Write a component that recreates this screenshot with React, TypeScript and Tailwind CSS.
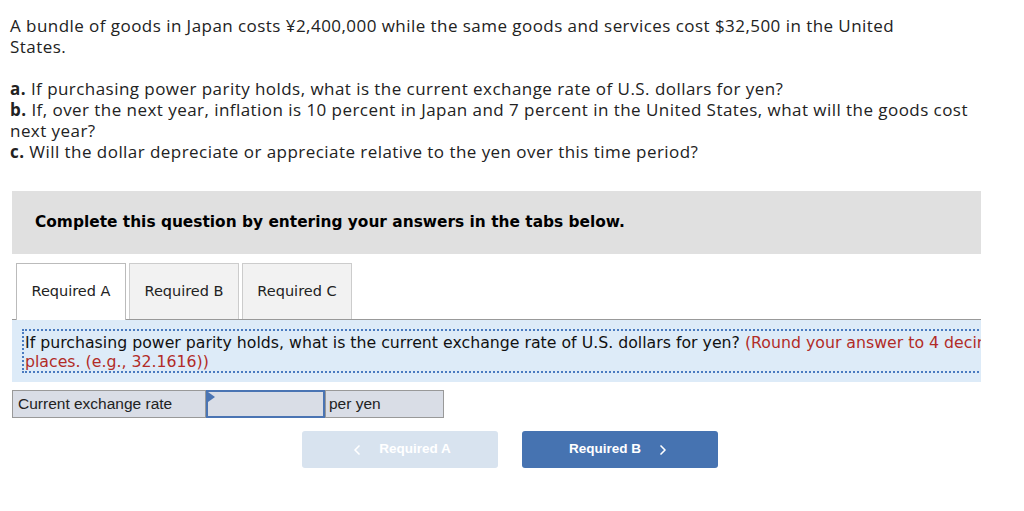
import { ChevronLeft, ChevronRight } from "lucide-react";

const tabs = ["Required A", "Required B", "Required C"];

export default function App() {
  return (
    <div className="h-[511px] w-[1024px] overflow-hidden bg-white">
      <div className="whitespace-nowrap pl-[10px] pt-[15px] font-['Open_Sans',sans-serif] text-[17px] leading-[21px] tracking-[0.45px] text-[#222]">
        <p>
          A bundle of goods in Japan costs ¥2,400,000 while the same goods and services cost $32,500 in the United
          <br />
          States.
        </p>
        <p className="mt-[21px]">
          <b>a.</b> If purchasing power parity holds, what is the current exchange rate of U.S. dollars for yen?
        </p>
        <p>
          <b>b.</b> If, over the next year, inflation is 10 percent in Japan and 7 percent in the United States, what
          will the goods cost
          <br />
          next year?
        </p>
        <p>
          <b>c.</b> Will the dollar depreciate or appreciate relative to the yen over this time period?
        </p>
      </div>

      <div className="ml-[12px] mt-[29px] w-[969px] font-['DejaVu_Sans',Verdana,sans-serif]">
        <div className="flex h-[63px] items-center bg-[#e0e0e0] pl-[23px] text-[15.4px] font-bold text-black">
          Complete this question by entering your answers in the tabs below.
        </div>

        <div className="mt-[9px] flex gap-[3px] border-b border-[#999] pl-[4px]">
          {tabs.map((t, i) => (
            <div
              key={t}
              className={
                i === 0
                  ? "-mb-px flex h-[57px] w-[110px] items-center justify-center border border-b-0 border-[#bbb] bg-white text-[14.5px] text-[#222]"
                  : "flex h-[56px] w-[110px] items-center justify-center border border-b-0 border-[#ccc] bg-[#f2f2f2] text-[14.5px] text-[#222]"
              }
            >
              {t}
            </div>
          ))}
        </div>

        <div className="h-[62px] overflow-hidden bg-[#ddebf8] pl-[10px] pt-[9px]">
          <div className="w-[1100px] border-y-2 border-l-2 border-dotted border-[#4a7bc0] pl-px pt-[2px] text-[15.75px] leading-[19px] text-[#111]">
            <p className="w-[1010px]">
              If purchasing power parity holds, what is the current exchange rate of U.S. dollars for yen?{" "}
              <span className="text-[#b22b27]">(Round your answer to 4 decimal places. (e.g., 32.1616))</span>
            </p>
          </div>
        </div>

        <div className="mt-[8px] flex h-[28px] w-[432px] font-['Liberation_Sans',Arial,sans-serif] text-[15.5px] text-[#222]">
          <div className="flex w-[194px] items-center border border-[#999] bg-[#d9dde6] pl-[5px]">
            Current exchange rate
          </div>
          <div className="relative w-[119px] border-2 border-[#4a74b3] bg-[#d9dde6]">
            <span className="absolute left-0 top-0 h-0 w-0 border-y-[5px] border-l-[7px] border-y-transparent border-l-[#4a74b3]" />
          </div>
          <div className="flex flex-1 items-center border border-[#999] bg-[#d9dde6] pl-[3px]">per yen</div>
        </div>

        <div className="mt-[13px] flex gap-[24px] pl-[290px] font-['Liberation_Sans',Arial,sans-serif] text-[13.5px] font-bold text-white">
          <div className="flex h-[37px] w-[196px] items-center justify-center gap-[14px] rounded-[3px] bg-[#d8e3ef]">
            <ChevronLeft className="h-[16px] w-[16px]" strokeWidth={2.5} />
            <span>Required A</span>
          </div>
          <div className="flex h-[37px] w-[196px] items-center justify-center gap-[14px] rounded-[3px] bg-[#4673b1]">
            <span>Required B</span>
            <ChevronRight className="h-[16px] w-[16px]" strokeWidth={2.5} />
          </div>
        </div>
      </div>
    </div>
  );
}
